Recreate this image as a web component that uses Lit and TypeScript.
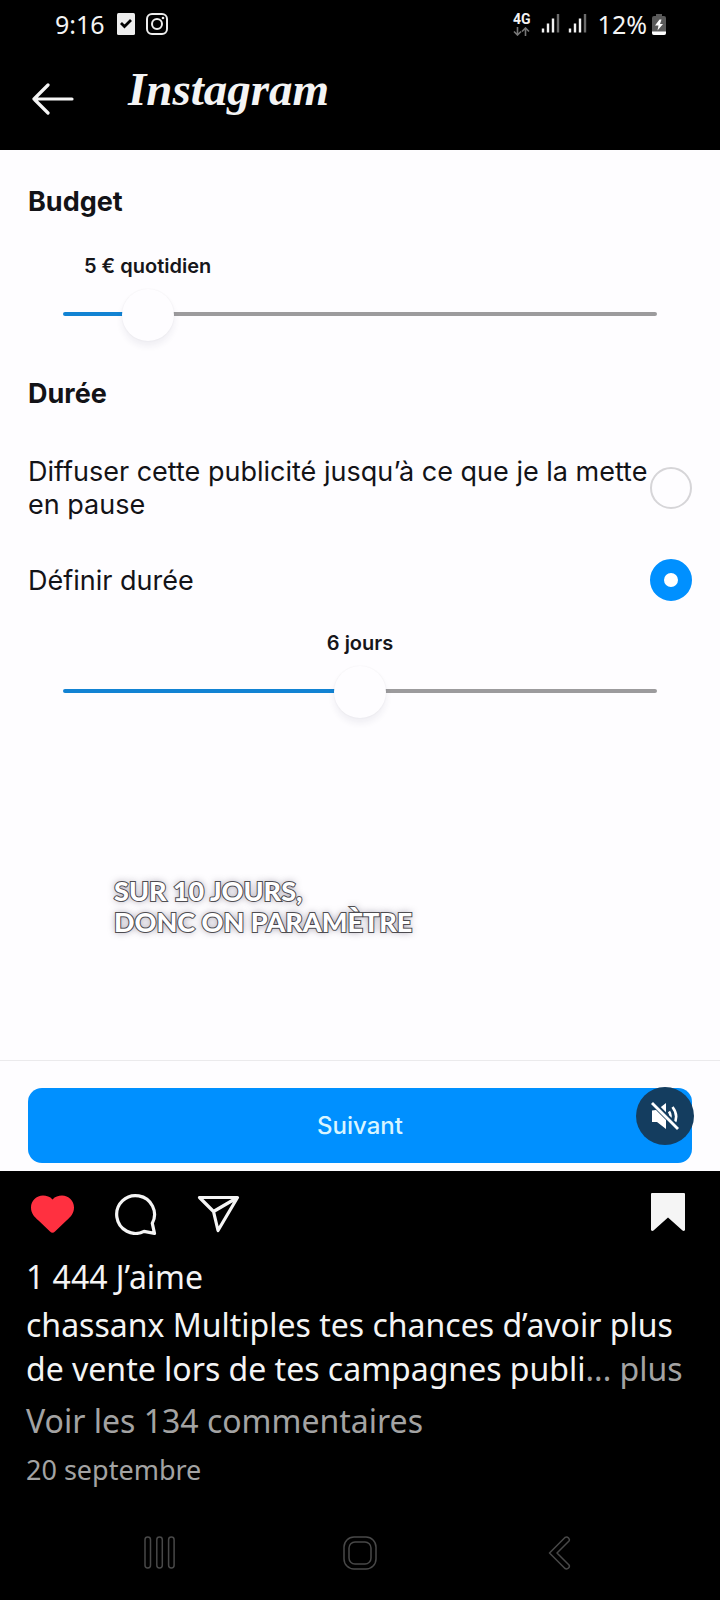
import { LitElement, html, css, svg } from "lit";
import { customElement, property, state } from "lit/decorators.js";

@customElement("value-slider")
class ValueSlider extends LitElement {
  @property({ type: Number }) min = 0;
  @property({ type: Number }) max = 100;
  @property({ type: Number }) value = 0;
  @property() unit = "";
  @property() name = "";

  static styles = css`
    :host { display: block; padding: 0 35px; }
    .scale { padding: 0 26px; }
    .bubble {
      display: flex; justify-content: center; width: 0; white-space: nowrap;
      font-size: 20px; line-height: 24px; font-weight: 600; color: #16161a;
    }
    .range {
      appearance: none; display: block; width: 100%; height: 52px; margin: 10px 0 0;
      background: none; cursor: pointer;
    }
    .range::-webkit-slider-runnable-track {
      height: 4px; border-radius: 2px;
      background: linear-gradient(to right, #1283d3 var(--fill), #9c9b9d var(--fill));
    }
    .range::-webkit-slider-thumb {
      appearance: none; width: 52px; height: 52px; margin-top: -23px; border-radius: 50%;
      background: #fefdff; box-shadow: 0 5px 7px rgba(40, 40, 80, 0.07), 0 0 2px rgba(0, 0, 0, 0.06);
    }
  `;

  render() {
    const fill = ((this.value - this.min) / (this.max - this.min)) * 100;
    return html`
      <div class="scale">
        <label class="bubble" for="range" style="margin-left:${fill}%">${this.value} ${this.unit}</label>
      </div>
      <input class="range" id="range" type="range" aria-label=${this.name}
        min=${this.min} max=${this.max} .value=${String(this.value)} style="--fill:${fill}%"
        @input=${(e: Event) => (this.value = Number((e.target as HTMLInputElement).value))} />
    `;
  }
}

const signal = svg`
  <path d="M2 14.500v4M7 9.500v9M12 4.500v14" stroke="#f2f2f2" stroke-width="2.400"/>
  <path d="M17 0v18.500" stroke="#6b6b6b" stroke-width="2.400"/>`;

@customElement("app-root")
class AppRoot extends LitElement {
  @state() private openEnded = false;

  static styles = css`
    :host {
      display: flex; flex-direction: column; min-height: 100vh; background: #000; color: #f4f4f4;
      font-family: "Noto Sans", sans-serif;
    }
    * { box-sizing: border-box; }
    svg { display: block; fill: none; }
    button { appearance: none; border: 0; padding: 0; background: none; color: inherit; font: inherit; cursor: pointer; }
    a { color: inherit; text-decoration: none; }

    .status { display: flex; align-items: center; height: 48px; padding: 0 54px 0 55px; font-size: 25px; line-height: 48px; }
    .time { margin-right: 12px; }
    .notif { margin-right: 11px; }
    .spacer { flex: 1; }
    .network { display: flex; flex-direction: column; gap: 2px; margin-right: 10px; font: 700 14px/12px Roboto, sans-serif; }
    .bars { margin-right: 7px; }
    .percent { margin: 0 5px 0 3px; }

    .header { display: flex; align-items: center; gap: 54px; height: 102px; padding: 0 32px; }
    .brand { font: italic 700 47px/64px "Liberation Serif", serif; margin: 0 0 20px; }

    .media {
      flex: 1; display: flex; flex-direction: column; background: #fefdff; color: #131317;
      font-family: Inter, sans-serif;
    }
    .form { padding: 34px 28px 0; }
    .title { margin: 0; font-size: 27px; line-height: 36px; font-weight: 700; }
    .budget { margin: 34px 0 36px; }
    .option { display: flex; align-items: center; gap: 2px; font-size: 27px; line-height: 33px; }
    .option.first { margin: 43px 0 38px; }
    .option-text { flex: 1; }
    .radio { appearance: none; flex: none; width: 42px; height: 42px; margin: 0; border: 2px solid #d6d5d8; border-radius: 50%; }
    .radio:checked { border: 14px solid #0090ff; background: #fff; }
    .days { margin-top: 30px; }

    .subtitle {
      margin: 158px 28px 0 114px; font: 900 27px/31px Lato, sans-serif; color: #fff; text-transform: uppercase;
      paint-order: stroke fill; -webkit-text-stroke: 2px #555; text-shadow: 0 0 7px rgba(40, 30, 60, 0.5);
    }
    .footer { position: relative; margin-top: auto; padding: 27px 28px 8px; border-top: 1px solid #ebeaec; }
    .next {
      display: block; width: 100%; height: 75px; border-radius: 14px; background: #0090ff; color: #d9f5ff;
      font-size: 24px; font-weight: 500;
    }
    .mute {
      position: absolute; top: 26px; right: 26px; display: grid; place-items: center;
      width: 58px; height: 58px; border-radius: 50%; background: #143d5f;
    }

    .actions { display: flex; align-items: center; height: 84px; padding: 0 34px 0 30px; }
    .action { margin-right: 38px; }
    .action.save { margin: 0 0 0 auto; }
    .post { padding: 0 26px 14px; font-size: 32px; line-height: 44px; }
    .line { margin: 0; }
    .likes { margin-bottom: 4px; }
    .muted { color: #a3a3a3; }
    .comments { display: block; margin-top: 8px; }
    .date { margin: 5px 0 0; font-size: 27px; }
    .nav { display: flex; justify-content: space-around; align-items: center; height: 94px; padding: 0 60px; }
  `;

  render() {
    return html`
      <div class="status">
        <span class="time">9:16</span>
        <svg class="notif" width="18" height="22" viewBox="0 0 18 22">
          <rect width="18" height="22" rx="1.500" fill="#ededed"/>
          <path d="M4 10l3.500 3.500L14 7" stroke="#000" stroke-width="2.800"/>
        </svg>
        <svg width="22" height="22" viewBox="0 0 22 22" stroke="#ededed" stroke-width="2">
          <rect x="1" y="1" width="20" height="20" rx="5"/>
          <circle cx="11" cy="11" r="5"/><circle cx="17" cy="5" r="1.300" fill="#ededed" stroke="none"/>
        </svg>
        <span class="spacer"></span>
        <span class="network">4G
          <svg width="17" height="9" viewBox="0 0 17 9" stroke="#777" stroke-width="1.600">
            <path d="M4.500 0v8M1 4.500L4.500 8L8 4.500M12.500 9V1M9 4.500L12.500 1L16 4.500"/>
          </svg>
        </span>
        <svg class="bars" width="20" height="20" viewBox="0 0 20 20">${signal}</svg>
        <svg class="bars" width="20" height="20" viewBox="0 0 20 20">${signal}</svg>
        <span class="percent">12%</span>
        <svg width="14" height="21" viewBox="0 0 14 21">
          <path d="M4 0h6v2h2q2 0 2 2v15q0 2-2 2H2q-2 0-2-2V4q0-2 2-2h2z" fill="#5a5a5a"/>
          <path d="M0 17.500h14V19q0 2-2 2H2q-2 0-2-2z" fill="#fff"/>
          <path d="M7.500 5.500L3 11.500h3.500L5.500 16.500L11 10H8l1.500-4.500z" fill="#fff"/>
        </svg>
      </div>

      <header class="header">
        <button aria-label="Retour">
          <svg width="42" height="32" viewBox="0 0 42 32" stroke="#f5f5f5" stroke-width="3.200" stroke-linecap="round" stroke-linejoin="round">
            <path d="M16 2L2 16l14 14M2 16h38"/>
          </svg>
        </button>
        <h1 class="brand">Instagram</h1>
      </header>

      <section class="media">
        <div class="form">
          <h2 class="title">Budget</h2>
          <value-slider class="budget" name="Budget" .min=${1} .max=${38} .value=${5} unit="€ quotidien"></value-slider>
          <h2 class="title">Durée</h2>
          <label class="option first">
            <span class="option-text">Diffuser cette publicité jusqu’à ce que je la mette en pause</span>
            <input class="radio" type="radio" name="duration" .checked=${this.openEnded} @change=${() => (this.openEnded = true)} />
          </label>
          <label class="option">
            <span class="option-text">Définir durée</span>
            <input class="radio" type="radio" name="duration" .checked=${!this.openEnded} @change=${() => (this.openEnded = false)} />
          </label>
          <value-slider class="days" name="Durée" .min=${1} .max=${11} .value=${6} unit="jours"></value-slider>
        </div>
        <div class="subtitle">Sur 10 jours,<br />donc on paramètre</div>
        <div class="footer">
          <button class="next">Suivant</button>
          <button class="mute" aria-label="Activer le son">
            <svg width="28" height="28" viewBox="0 0 28 28">
              <path d="M1 8.500L5 8l10 10v9L6 20H1zM8 6.500L15 1v12.500z" fill="#fff"/>
              <path d="M18 9.500q3 4.500 0 9M21.500 5q6.500 8.500 1.500 17" stroke="#fff" stroke-width="2.600"/>
              <path d="M3 0L29 26" stroke="#143d5f" stroke-width="2.500"/>
              <path d="M1 1L27 27" stroke="#fff" stroke-width="2.800"/>
            </svg>
          </button>
        </div>
      </section>

      <div class="actions">
        <button class="action" aria-label="J’aime">
          <svg width="45" height="44" viewBox="0 0 45 44">
            <path d="M22.500 8.500C20 5.500 16.500 4.500 13 4.500C6.500 4.500 1 9.500 1 16.500c0 6 3.500 9.500 7.500 13L20 40.500q2.500 2.500 5 0L36.500 29.500C40.500 26 44 22.500 44 16.500C44 9.500 38.500 4.500 32 4.500c-3.500 0-7 1-9.500 4z" fill="#ff3040"/>
          </svg>
        </button>
        <button class="action" aria-label="Commenter">
          <svg width="45" height="44" viewBox="0 0 45 44" stroke="#f5f5f5" stroke-width="3.200" stroke-linejoin="round">
            <path d="M39.300 32.300A18.900 18.900 0 1 0 31 40.400L41.500 42.400Z"/>
          </svg>
        </button>
        <button class="action" aria-label="Partager">
          <svg width="45" height="44" viewBox="0 0 45 44" stroke="#f5f5f5" stroke-width="3.200" stroke-linejoin="round">
            <path d="M3.500 6.500H41.500L22 39.500L17.500 20.500ZM17.500 20.500L41.500 6.500"/>
          </svg>
        </button>
        <button class="action save" aria-label="Enregistrer">
          <svg width="36" height="44" viewBox="0 0 36 44">
            <path d="M2 2H34q1 0 1 1V39q-1 1.500-2.500.500L18 26.500L3.500 39.500Q2 40.500 1 39V3q0-1 1-1z" fill="#f5f5f5"/>
          </svg>
        </button>
      </div>

      <div class="post">
        <p class="line likes">1 444 J’aime</p>
        <p class="line">chassanx Multiples tes chances d’avoir plus de vente lors de tes campagnes publi<span class="muted">... plus</span></p>
        <a class="comments muted" href="#">Voir les 134 commentaires</a>
        <p class="date muted">20 septembre</p>
      </div>

      <nav class="nav">
        <button aria-label="Applications récentes">
          <svg width="32" height="34" viewBox="0 0 32 34" stroke="#484848" stroke-width="1.500">
            <rect x="1" y="1" width="5.500" height="31" rx="2.700"/><rect x="12.800" y="1" width="5.500" height="31" rx="2.700"/><rect x="24.600" y="1" width="5.500" height="31" rx="2.700"/>
          </svg>
        </button>
        <button aria-label="Accueil">
          <svg width="34" height="34" viewBox="0 0 34 34" stroke="#484848" stroke-width="1.500">
            <rect x="1" y="1" width="32" height="32" rx="10"/><rect x="6" y="6" width="22" height="22" rx="6"/>
          </svg>
        </button>
        <button aria-label="Précédent">
          <svg width="32" height="34" viewBox="0 0 32 34" stroke="#484848" stroke-width="1.500" stroke-linejoin="round">
            <path d="M5.500 17L21 1.500q2-1 3.500.500q1.500 1.500.500 3L13 17L25 29q1 1.500-.500 3q-1.500 1.500-3.500.500z"/>
          </svg>
        </button>
      </nav>
    `;
  }
}
